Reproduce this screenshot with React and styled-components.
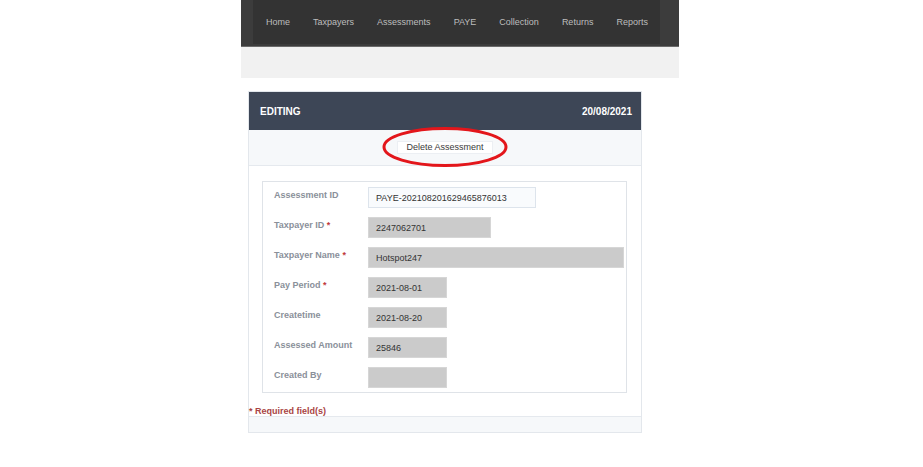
import React from 'react';
import styled, { createGlobalStyle } from 'styled-components';

const GlobalStyle = createGlobalStyle`
  html, body {
    margin: 0;
    padding: 0;
    background: #ffffff;
    font-family: "Liberation Sans", Arial, sans-serif;
  }
`;

const Page = styled.div`
  width: 438px;
  margin-left: 241px;
  display: flex;
  flex-direction: column;
`;

const NavBar = styled.div`
  height: 47px;
  box-sizing: border-box;
  background: #3c3c3c;
  padding: 0 19px 2px 12px;
  display: flex;
  border-bottom: 1px solid #6a6a6a;
`;

const NavInner = styled.nav`
  flex: 1;
  background: #333333;
  display: flex;
  align-items: center;
  justify-content: space-between;
  padding: 0 12px 0 13px;
`;

const NavItem = styled.span`
  color: #bdbdbd;
  font-size: 9px;
`;

const Band = styled.div`
  height: 31px;
  background: #f1f1f1;
`;

const Card = styled.div`
  width: 394px;
  margin: 13px 0 0 7px;
  border: 1px solid #e3e7ec;
  box-sizing: border-box;
  background: #ffffff;
`;

const CardHeader = styled.div`
  height: 38px;
  background: #3d4656;
  display: flex;
  align-items: center;
  justify-content: space-between;
  padding: 0 9px 0 11px;
  color: #ffffff;
  font-size: 10px;
  font-weight: bold;
`;

const ActionRow = styled.div`
  height: 35px;
  background: #f6f8fa;
  border-bottom: 1px solid #e5e9ee;
  display: flex;
  align-items: center;
  justify-content: center;
`;

const ButtonWrap = styled.div`
  position: relative;
  display: flex;
`;

const Button = styled.button`
  background: #ffffff;
  border: 1px solid #eceff3;
  font-family: "Liberation Sans", Arial, sans-serif;
  font-size: 9px;
  color: #3a3a3a;
  height: 13px;
  width: 96px;
  padding: 0;
  line-height: 11px;
`;

const Circle = styled.svg`
  position: absolute;
  left: -15px;
  top: -16px;
  overflow: visible;
  pointer-events: none;
`;

const FormArea = styled.div`
  padding: 15px 14px 0 13px;
`;

const FieldBox = styled.div`
  border: 1px solid #dfe3e8;
  padding: 5px 0 4px 11px;
  display: flex;
  flex-direction: column;
  gap: 9px;
`;

const Row = styled.div`
  display: flex;
  align-items: flex-start;
`;

const Label = styled.div`
  width: 94px;
  flex-shrink: 0;
  font-size: 9px;
  font-weight: bold;
  color: #8a909a;
  padding-top: 3px;
`;

const Star = styled.span`
  color: #c0393b;
`;

const Input = styled.div`
  height: 21px;
  box-sizing: border-box;
  width: ${({ $w }) => $w}px;
  background: ${({ $plain }) => ($plain ? '#f9fbfd' : '#cbcbcb')};
  border: 1px solid ${({ $plain }) => ($plain ? '#dde4ec' : '#d6d6d6')};
  font-size: 9px;
  color: #333333;
  display: flex;
  align-items: center;
  padding-left: 7px;
`;

const Required = styled.div`
  margin-top: 13px;
  font-size: 9px;
  font-weight: bold;
  color: #a94444;
  height: 10px;
  line-height: 10px;
`;

const Footer = styled.div`
  height: 15px;
  background: #f6f8fa;
  border-top: 1px solid #e5e9ee;
`;

const navItems = ['Home', 'Taxpayers', 'Assessments', 'PAYE', 'Collection', 'Returns', 'Reports'];

const fields = [
  { label: 'Assessment ID', value: 'PAYE-202108201629465876013', w: 168, plain: true },
  { label: 'Taxpayer ID', req: true, value: '2247062701', w: 123 },
  { label: 'Taxpayer Name', req: true, value: 'Hotspot247', w: 256 },
  { label: 'Pay Period', req: true, value: '2021-08-01', w: 79 },
  { label: 'Createtime', value: '2021-08-20', w: 79 },
  { label: 'Assessed Amount', value: '25846', w: 79 },
  { label: 'Created By', value: '', w: 79 },
];

const App = () => {
  return (
    <Page>
      <GlobalStyle />
      <NavBar>
        <NavInner>
          {navItems.map((item) => (
            <NavItem key={item}>{item}</NavItem>
          ))}
        </NavInner>
      </NavBar>
      <Band />
      <Card>
        <CardHeader>
          <span>EDITING</span>
          <span>20/08/2021</span>
        </CardHeader>
        <ActionRow>
          <ButtonWrap>
            <Button>Delete Assessment</Button>
            <Circle width="126" height="44" viewBox="0 0 126 44">
              <ellipse cx="63" cy="22" rx="61" ry="18.5" fill="none" stroke="#e3161b" strokeWidth="3" />
            </Circle>
          </ButtonWrap>
        </ActionRow>
        <FormArea>
          <FieldBox>
            {fields.map((f) => (
              <Row key={f.label}>
                <Label>
                  {f.label}
                  {f.req && <Star> *</Star>}
                </Label>
                <Input $w={f.w} $plain={f.plain}>{f.value}</Input>
              </Row>
            ))}
          </FieldBox>
        </FormArea>
        <Required>* Required field(s)</Required>
        <Footer />
      </Card>
    </Page>
  );
};

export default App;
